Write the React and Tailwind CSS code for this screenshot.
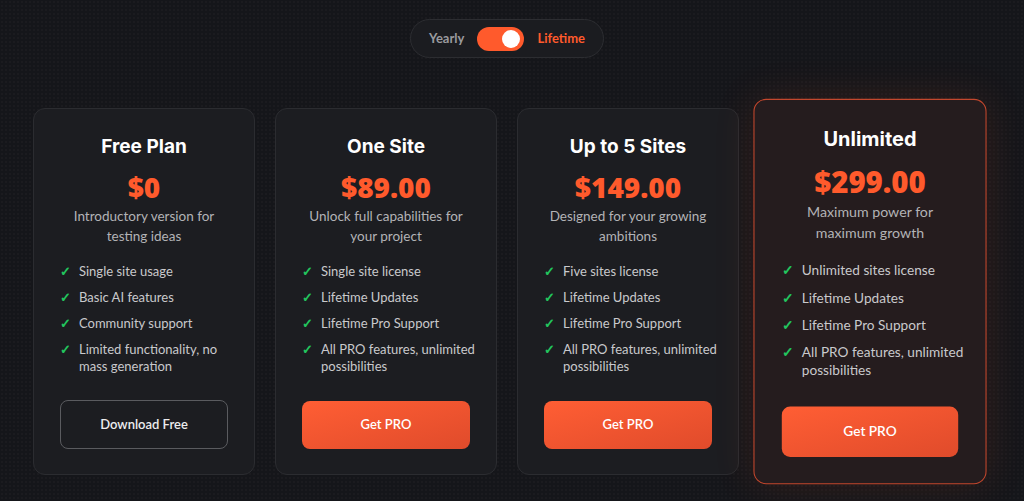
import { useState } from "react";

const plans = [
  {
    name: "Free Plan",
    price: "$0",
    desc: "Introductory version for testing ideas",
    features: ["Single site usage", "Basic AI features", "Community support", "Limited functionality, no mass generation"],
    cta: "Download Free",
    free: true,
  },
  {
    name: "One Site",
    price: "$89.00",
    desc: "Unlock full capabilities for your project",
    features: ["Single site license", "Lifetime Updates", "Lifetime Pro Support", "All PRO features, unlimited possibilities"],
    cta: "Get PRO",
  },
  {
    name: "Up to 5 Sites",
    price: "$149.00",
    desc: "Designed for your growing ambitions",
    features: ["Five sites license", "Lifetime Updates", "Lifetime Pro Support", "All PRO features, unlimited possibilities"],
    cta: "Get PRO",
  },
  {
    name: "Unlimited",
    price: "$299.00",
    desc: "Maximum power for maximum growth",
    features: ["Unlimited sites license", "Lifetime Updates", "Lifetime Pro Support", "All PRO features, unlimited possibilities"],
    cta: "Get PRO",
    featured: true,
  },
];

function PlanCard({ plan }) {
  return (
    <div
      className={`flex flex-col rounded-xl border px-[26px] pt-[26px] pb-[25px] ${
        plan.featured
          ? "scale-105 border-[#c4472d] bg-[#251c1e] shadow-[0_0_40px_rgba(255,90,44,0.12)]"
          : "border-[#2b2c30] bg-[#1c1d21]"
      }`}
    >
      <h3 className="text-center font-['Inter',sans-serif] text-[19px] leading-6 font-bold text-white">{plan.name}</h3>
      <div className="mt-3 text-center font-['Open_Sans',sans-serif] text-[28px] leading-8 font-extrabold text-[#ff5a2c]">
        {plan.price}
      </div>
      <p className="mt-[3px] text-center text-[13.5px] leading-5 text-[#b3b3b6]">{plan.desc}</p>
      <ul className="-mr-3 mt-[17px] flex flex-1 flex-col gap-[9px]">
        {plan.features.map((f) => (
          <li key={f} className="flex gap-[9px] text-[13px] leading-[17px] text-[#c9c9cc]">
            <span className="w-[10px] shrink-0 text-[13px] font-bold text-[#22c55e]">✓</span>
            <span>{f}</span>
          </li>
        ))}
      </ul>
      {plan.free ? (
        <button className="mt-[25px] h-[49px] w-full rounded-lg border border-[#5a5b5f] text-[13px] font-semibold text-[#ececee]">
          {plan.cta}
        </button>
      ) : (
        <button className="mt-[25px] h-[48px] w-full rounded-lg bg-gradient-to-br from-[#ff5e34] to-[#e04b2b] text-[13px] font-semibold text-white">
          {plan.cta}
        </button>
      )}
    </div>
  );
}

export default function App() {
  const [lifetime, setLifetime] = useState(true);

  return (
    <div className="min-h-[501px] bg-[#15161a] bg-[radial-gradient(rgba(255,255,255,0.025)_1px,transparent_1px)] bg-[length:4px_4px] font-['Lato',sans-serif]">
      <div className="mx-auto w-[948px] -translate-x-[5px] pt-[19px]">
        <div className="flex justify-center">
          <div className="flex h-[39px] items-center gap-[13px] rounded-full border border-[#2c2d31] bg-[#1b1c20] px-[18px]">
            <span className={`text-[13px] font-bold ${lifetime ? "text-[#9a9a9e]" : "text-[#ff5a2c]"}`}>Yearly</span>
            <button
              onClick={() => setLifetime(!lifetime)}
              className="relative h-[24px] w-[47px] rounded-full bg-[#ff5a2c]"
            >
              <span
                className={`absolute top-[3px] h-[18px] w-[18px] rounded-full bg-white ${lifetime ? "right-[4px]" : "left-[4px]"}`}
              />
            </button>
            <span className={`text-[13px] font-bold ${lifetime ? "text-[#ff5a2c]" : "text-[#9a9a9e]"}`}>Lifetime</span>
          </div>
        </div>
        <div className="mt-[50px] grid grid-cols-4 gap-5">
          {plans.map((p) => (
            <PlanCard key={p.name} plan={p} />
          ))}
        </div>
      </div>
    </div>
  );
}
